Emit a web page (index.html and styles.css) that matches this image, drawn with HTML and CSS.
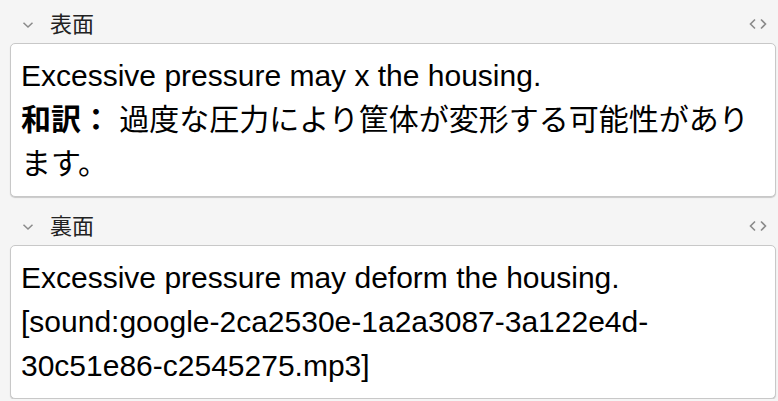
FILE: index.html
```html
<!DOCTYPE html>
<html lang="ja">
<head>
<meta charset="utf-8">
<link rel="stylesheet" href="styles.css">
</head>
<body>
<div class="fields">
  <div class="field">
    <div class="field-head">
      <svg class="chev" width="12" height="8" viewBox="0 0 12 8"><path d="M1.5 1.8 L6 6 L10.5 1.8" fill="none" stroke="#8a8a8a" stroke-width="1.5"/></svg>
      <span class="label">表面</span>
      <svg class="code" width="20" height="12" viewBox="0 0 20 12"><path d="M7 1.5 L2.5 6 L7 10.5 M13 1.5 L17.5 6 L13 10.5" fill="none" stroke="#8a8a8a" stroke-width="1.6"/></svg>
    </div>
    <div class="card">
      <div>Excessive pressure may x the housing.</div>
      <div><b>和訳：</b> 過度な圧力により筐体が変形する可能性があります。</div>
    </div>
  </div>
  <div class="field">
    <div class="field-head">
      <svg class="chev" width="12" height="8" viewBox="0 0 12 8"><path d="M1.5 1.8 L6 6 L10.5 1.8" fill="none" stroke="#8a8a8a" stroke-width="1.5"/></svg>
      <span class="label">裏面</span>
      <svg class="code" width="20" height="12" viewBox="0 0 20 12"><path d="M7 1.5 L2.5 6 L7 10.5 M13 1.5 L17.5 6 L13 10.5" fill="none" stroke="#8a8a8a" stroke-width="1.6"/></svg>
    </div>
    <div class="card">
      <div>Excessive pressure may deform the housing.</div>
      <div>[sound:google-2ca2530e-1a2a3087-3a122e4d-30c51e86-c2545275.mp3]</div>
    </div>
  </div>
</div>
</body>
</html>
```
FILE: styles.css
```css
html, body {
  margin: 0;
  padding: 0;
  background: #f5f5f5;
}
body {
  font-family: "Liberation Sans", "Noto Sans CJK JP", Arial, sans-serif;
  color: #000;
}
.fields {
  display: flex;
  flex-direction: column;
  gap: 10px;
  padding: 5px 2px 0 10px;
}
.field-head {
  height: 38px;
  display: flex;
  align-items: center;
  padding-left: 12px;
  padding-right: 8px;
}
.chev {
  display: block;
  margin-top: 1px;
}
.label {
  font-family: "Noto Sans CJK JP", sans-serif;
  font-size: 22px;
  color: #222;
  margin-left: 16px;
  margin-top: -4px;
  flex: 1;
  line-height: 1;
}
.code {
  display: block;
}
.card {
  background: #fff;
  border: 1px solid #c8c8c8;
  border-radius: 5px;
  box-shadow: 0 1px 1px rgba(0,0,0,0.18);
  padding: 10px;
  font-size: 30px;
  line-height: 44px;
}
.card b {
  font-weight: bold;
}
```
